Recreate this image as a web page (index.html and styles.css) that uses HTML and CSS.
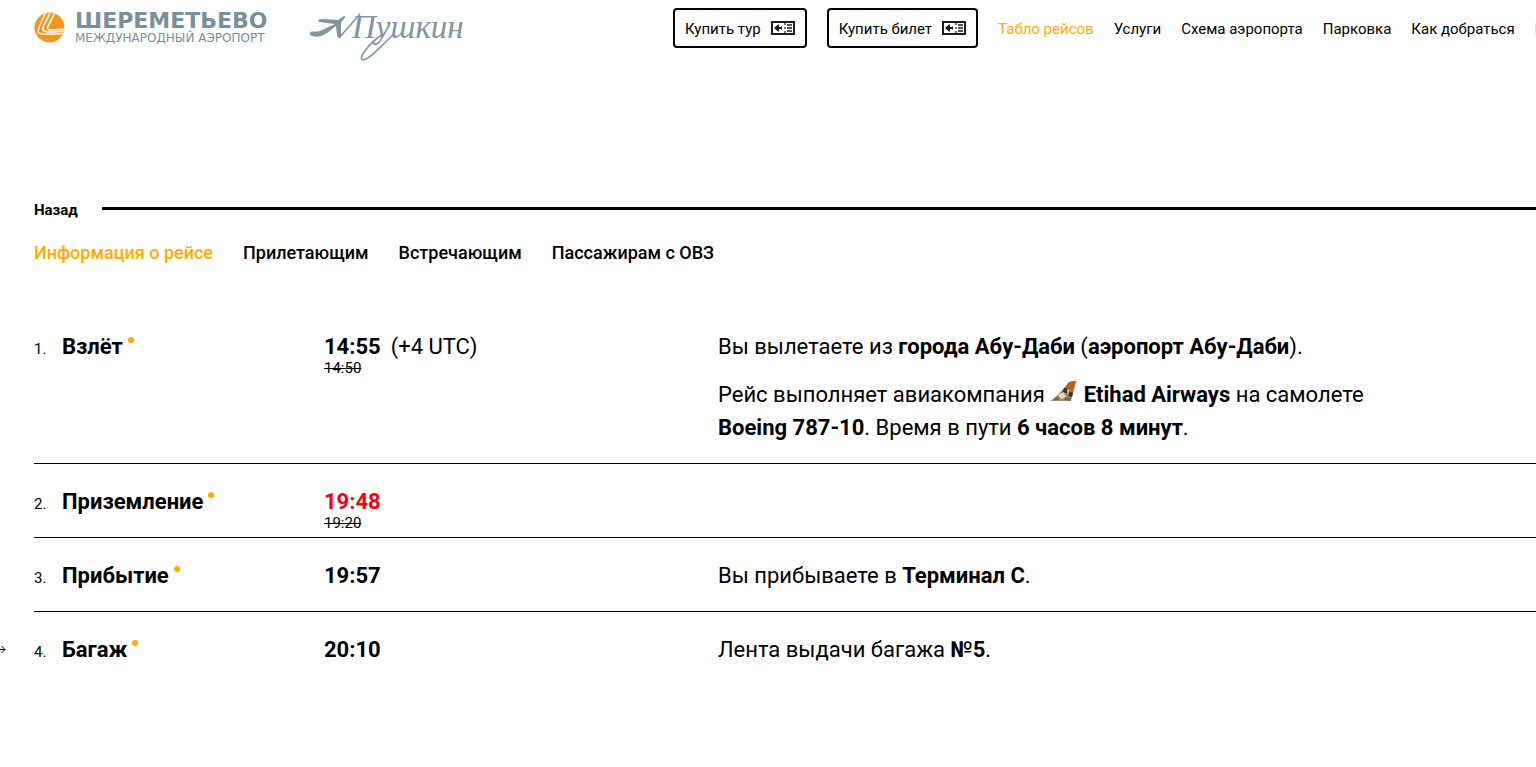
FILE: index.html
```html
<!DOCTYPE html>
<html lang="ru">
<head>
<meta charset="utf-8">
<title>Шереметьево — информация о рейсе</title>
<link rel="stylesheet" href="styles.css">
</head>
<body>
<svg class="sprite" aria-hidden="true">
  <symbol id="ticket" viewBox="0 0 24 14">
    <path d="M1 1H23V13H1Z" fill="none" stroke="#1c1c1c" stroke-width="2"/>
    <path d="M14 2V4M14 6V8M14 10V12" stroke="#1c1c1c" stroke-width="1.200"/>
    <path d="M16 4H21M16 7H21M16 10H21" stroke="#1c1c1c" stroke-width="1.600"/>
    <path d="M3 7L7 3.500H8V6H10L11 5V9L10 8H8V10.500H7Z" fill="#1c1c1c"/>
  </symbol>
</svg>
<header class="header">
  <a class="logo" href="#">
    <svg class="logo-mark" viewBox="0 0 30 30" aria-hidden="true">
      <circle cx="15" cy="15" r="14.500" fill="#f7941e"/>
      <path d="M11 1C8 8 4 15 4 19C4 22 14 22 30 20.500" fill="none" stroke="#fff" stroke-width="1.500"/>
      <path d="M15.500 1C12 8 8.500 14 8.500 17C9 20 17 19.500 30 18.500" fill="none" stroke="#fff" stroke-width="1.500"/>
      <path d="M20 1C17 8 13 13 13 16C14 18 20 17.500 30 16.500" fill="none" stroke="#fff" stroke-width="1.500"/>
    </svg>
    <span class="logo-words">
      <span class="logo-name">ШЕРЕМЕТЬЕВО</span>
      <span class="logo-sub">МЕЖДУНАРОДНЫЙ АЭРОПОРТ</span>
    </span>
  </a>
  <a class="signature" href="#">
    <svg class="signature-art" viewBox="0 0 160 54" aria-hidden="true">
      <path d="M0 25C2 22 5 25 10 23L25 16L9 14C7 12 9 11 13 11L28 12L34 8Q37 8 33 12L31 15L31 28C30 31 28 31 27 27L26 18C18 25 9 31 3 28C0 28 0 26 0 25Z" fill="#8095a2"/>
      <path d="M29 30L50 6M84 26C69 40 60 51 53 52C47 51 59 35 73 26" fill="none" stroke="#8095a2" stroke-width="1.600"/>
      <text x="42" y="30" class="signature-text">Пушкин</text>
    </svg>
  </a>
  <nav class="nav">
    <button class="buy" type="button"><span>Купить тур</span><svg class="ticket"><use href="#ticket"/></svg></button>
    <button class="buy" type="button"><span>Купить билет</span><svg class="ticket"><use href="#ticket"/></svg></button>
    <a class="nav-link active" href="#">Табло рейсов</a>
    <a class="nav-link" href="#">Услуги</a>
    <a class="nav-link" href="#">Схема аэропорта</a>
    <a class="nav-link" href="#">Парковка</a>
    <a class="nav-link" href="#">Как добраться</a>
    <a class="nav-link" href="#">Новости</a>
  </nav>
</header>
<main class="main">
  <div class="back"><a class="back-link" href="#">Назад</a></div>
  <nav class="tabs">
    <a class="tab active" href="#">Информация о рейсе</a>
    <a class="tab" href="#">Прилетающим</a>
    <a class="tab" href="#">Встречающим</a>
    <a class="tab" href="#">Пассажирам с ОВЗ</a>
  </nav>
  <ol class="stages">
    <li class="stage">
      <span class="num">1.</span>
      <h2 class="name">Взлёт<i class="dot"></i></h2>
      <div class="time"><div class="clock"><b>14:55</b><span class="zone">(+4 UTC)</span></div><del class="old">14:50</del></div>
      <div class="desc">
        <p>Вы вылетаете из <b>города Абу-Даби</b> (<b>аэропорт Абу-Даби</b>).</p>
        <p>Рейс выполняет авиакомпания <svg class="tail" viewBox="0 0 26 21" aria-hidden="true">
          <path d="M0 20C8 15 14 7 18 2Q20 0 26 0L21 20Z" fill="#a58a68"/>
          <path d="M18 2Q20 0 26 0L23 11L19 8L16 6Z" fill="#c85c1d"/>
          <path d="M14 7L18 7L17 12L12 13Z M20 10L23 12L22 16L18 15Z" fill="#4b2c23"/>
          <path d="M8 14L14 11L16 16L11 18Z M17 8L19 9L18 14Z" fill="#e5d5b0"/>
          <path d="M6 16L10 17L9 19L3 19Z M15 16L21 17L20 20L14 19Z" fill="#756c54"/>
        </svg> <b>Etihad Airways</b> на самолете <b>Boeing 787-10</b>. Время в пути <b>6 часов 8 минут</b>.</p>
      </div>
    </li>
    <li class="stage">
      <span class="num">2.</span>
      <h2 class="name">Приземление<i class="dot"></i></h2>
      <div class="time"><div class="clock late"><b>19:48</b></div><del class="old">19:20</del></div>
    </li>
    <li class="stage">
      <span class="num">3.</span>
      <h2 class="name">Прибытие<i class="dot"></i></h2>
      <div class="time"><div class="clock"><b>19:57</b></div></div>
      <div class="desc"><p>Вы прибываете в <b>Терминал C</b>.</p></div>
    </li>
    <li class="stage current">
      <svg class="arrow" viewBox="0 0 7 9" aria-hidden="true"><path d="M0 4.500H6M2.500 1L6 4.500L2.500 8" fill="none" stroke="#000"/></svg>
      <span class="num">4.</span>
      <h2 class="name">Багаж<i class="dot"></i></h2>
      <div class="time"><div class="clock"><b>20:10</b></div></div>
      <div class="desc"><p>Лента выдачи багажа <b>№5</b>.</p></div>
    </li>
  </ol>
</main>
</body>
</html>
```
FILE: styles.css
```css
* { box-sizing: border-box; }
body {
  margin: 0;
  background: #fff;
  color: #000;
  font-family: Roboto, "Noto Sans", sans-serif;
  font-size: 15px;
  overflow-x: hidden;
}
a { color: inherit; text-decoration: none; }
.sprite { position: absolute; width: 0; height: 0; }
.header {
  display: flex;
  align-items: flex-start;
  padding: 8px 0 0 34px;
  overflow: hidden;
}
.logo { display: flex; gap: 10px; padding-top: 4px; width: 276px; flex: none; color: #788f9c; }
.logo-mark { width: 31px; height: 31px; flex: none; }
.logo-words { display: flex; flex-direction: column; font-family: "DejaVu Sans", sans-serif; white-space: nowrap; }
.logo-name { font-size: 22px; line-height: 18px; font-weight: 700; }
.logo-sub { font-size: 12px; line-height: 16px; }
.signature { flex: none; }
.signature-art { display: block; width: 160px; height: 54px; overflow: visible; }
.signature-text { font: italic 33px "Liberation Serif", serif; fill: #8095a2; }
.nav { display: flex; align-items: center; gap: 20px; margin-left: 203px; flex: none; white-space: nowrap; }
.nav-link, .buy span { padding-top: 2px; }
.buy {
  display: flex;
  align-items: center;
  gap: 10px;
  height: 40px;
  padding: 0 10px;
  border: 2px solid #000;
  border-radius: 4px;
  background: #fff;
  color: #000;
  font: inherit;
}
.ticket { width: 24px; height: 14px; }
.nav-link.active, .tab.active { color: #ffab00; }
.main { padding: 138px 0 60px 34px; }
.back { display: flex; align-items: center; gap: 24px; line-height: 20px; font-weight: 700; }
.back::after { content: ""; flex: 1; height: 3px; margin-bottom: 4px; background: #000; }
.tabs { display: flex; gap: 30px; margin-top: 20px; font-size: 18px; line-height: 26px; font-weight: 500; }
.stages { list-style: none; margin: 43px 0 0; padding: 0; font-size: 22px; line-height: 33px; }
.stage {
  position: relative;
  display: grid;
  grid-template-columns: 28px 262px 394px minmax(0, 690px);
  padding: 21px 0 6px;
  border-bottom: 1px solid #000;
}
.stage:last-child { border-bottom: 0; }
.num { font-size: 15px; padding-top: 3px; }
.name { display: flex; gap: 5px; margin: 0; font-size: 22px; font-weight: 700; }
.dot { width: 6px; height: 6px; margin-top: 7px; border-radius: 50%; background: #ffab00; }
.time { padding-top: 3px; }
.clock { display: flex; gap: 10px; line-height: 28px; }
.late { color: #f8000f; }
.old { display: block; font-size: 15px; line-height: 15px; }
.desc { padding-bottom: 13px; }
.desc p { margin: 0; }
.desc p + p { margin-top: 15px; }
.tail { width: 26px; height: 21px; margin-right: 2px; }
.arrow { position: absolute; left: -35px; top: 33px; width: 7px; height: 9px; }
```
